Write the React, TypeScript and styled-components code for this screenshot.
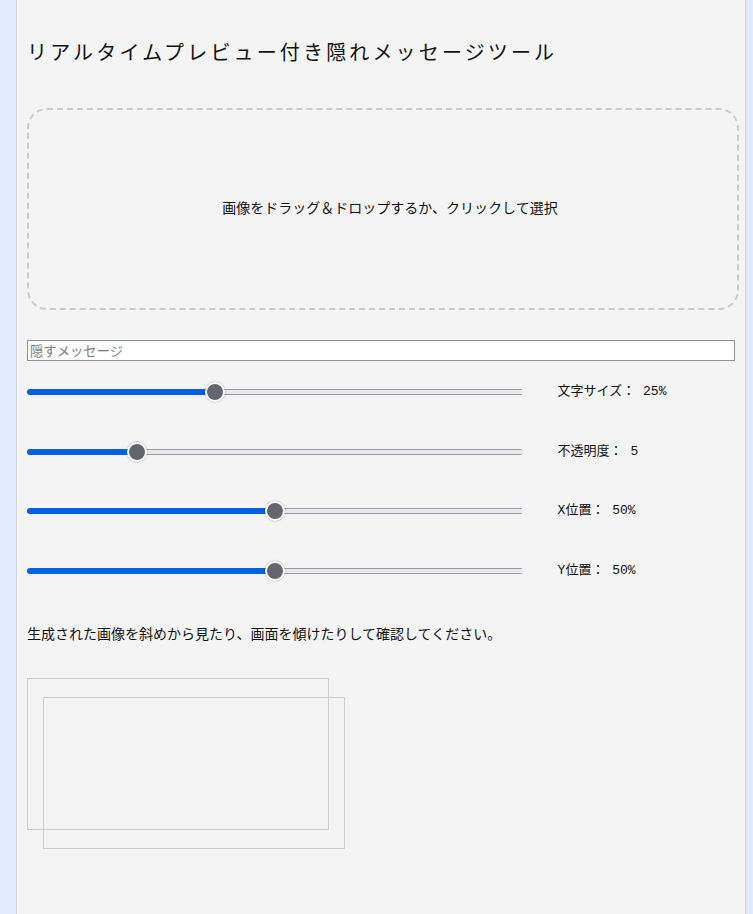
import React, { useState } from "react";
import styled, { createGlobalStyle } from "styled-components";

const GlobalStyle = createGlobalStyle`
  html, body {
    margin: 0;
    padding: 0;
    background: #e1e9fc;
  }
  body {
    font-family: "Noto Sans CJK JP", "Liberation Sans", sans-serif;
    color: #111;
  }
`;

const Panel = styled.div`
  box-sizing: border-box;
  width: 730px;
  margin-left: 16px;
  min-height: 100vh;
  background: #f4f4f4;
  border-left: 1px solid #d3d6dd;
  border-right: 1px solid #d3d6dd;
  padding: 40px 10px 40px;
`;

const Title = styled.h1`
  margin: 0;
  font-size: 20px;
  line-height: 24px;
  font-weight: 400;
  letter-spacing: 3.15px;
  color: #111;
`;

const DropZone = styled.div`
  box-sizing: border-box;
  margin-top: 44px;
  height: 202px;
  width: calc(100% + 4px);
  padding: 0 0 4px 14px;
  border: 2px dashed #cccccc;
  border-radius: 20px;
  display: flex;
  align-items: center;
  justify-content: center;
  font-size: 14px;
  line-height: 20px;
  color: #111;
  cursor: pointer;
`;

const MessageInput = styled.input`
  display: block;
  box-sizing: border-box;
  margin: 30px 0 0;
  width: 100%;
  height: 21px;
  padding: 0 2px;
  border: 1px solid #8f8f9d;
  background: #ffffff;
  font-family: "Noto Sans CJK JP", sans-serif;
  font-size: 13.33px;
  color: #111;
  outline: none;
  &::placeholder {
    color: #7a7a7a;
  }
`;

const Controls = styled.div`
  margin-top: 21px;
  display: flex;
  flex-direction: column;
  gap: 39.5px;
`;

const Row = styled.div`
  display: flex;
  align-items: center;
  height: 20px;
`;

const Range = styled.input`
  -webkit-appearance: none;
  appearance: none;
  width: 70%;
  height: 20px;
  margin: 0;
  padding: 0;
  background: transparent;
  --pct: 50%;
  &::-webkit-slider-runnable-track {
    height: 6px;
    border-radius: 3px;
    background:
      linear-gradient(to right, #0060df 0 var(--pct), transparent var(--pct)),
      linear-gradient(to bottom, #9a9aa6 0 1px, #e9e9ed 1px 5px, #9a9aa6 5px);
  }
  &::-webkit-slider-thumb {
    -webkit-appearance: none;
    appearance: none;
    width: 20px;
    height: 20px;
    margin-top: -7px;
    box-sizing: border-box;
    border-radius: 50%;
    border: 2px solid #ffffff;
    background: #65656f;
    box-shadow: 0 0 2px rgba(0, 0, 0, 0.35);
  }
`;

const Label = styled.span`
  margin-left: 35px;
  font-family: "Liberation Mono", "Noto Sans CJK JP", monospace;
  font-size: 13px;
  line-height: 20px;
  color: #111;
  white-space: pre;
`;

const Note = styled.p`
  margin: 42.5px 0 0;
  font-size: 14px;
  line-height: 20px;
  color: #111;
`;

const Preview = styled.div`
  position: relative;
  margin-top: 35px;
  width: 346px;
  height: 172px;
`;

const Canvas = styled.canvas`
  display: block;
  width: 300px;
  height: 150px;
  border: 1px solid #cccccc;
`;

const OverlayCanvas = styled(Canvas)`
  position: absolute;
  left: 16px;
  top: 19px;
`;

type SliderDef = {
  key: string;
  label: string;
  min: number;
  max: number;
  suffix: string;
};

const sliders: SliderDef[] = [
  { key: "size", label: "文字サイズ：", min: 10, max: 50, suffix: "%" },
  { key: "opacity", label: "不透明度：", min: 1, max: 20, suffix: "" },
  { key: "x", label: "X位置：", min: 0, max: 100, suffix: "%" },
  { key: "y", label: "Y位置：", min: 0, max: 100, suffix: "%" },
];

export default function App() {
  const [values, setValues] = useState<Record<string, number>>({
    size: 25,
    opacity: 5,
    x: 50,
    y: 50,
  });
  const [message, setMessage] = useState("");

  return (
    <>
      <GlobalStyle />
      <Panel>
        <Title>リアルタイムプレビュー付き隠れメッセージツール</Title>
        <DropZone>画像をドラッグ＆ドロップするか、クリックして選択</DropZone>
        <MessageInput
          type="text"
          placeholder="隠すメッセージ"
          value={message}
          onChange={(e) => setMessage(e.target.value)}
        />
        <Controls>
          {sliders.map((s) => {
            const v = values[s.key];
            const pct = ((v - s.min) / (s.max - s.min)) * 100;
            return (
              <Row key={s.key}>
                <Range
                  type="range"
                  min={s.min}
                  max={s.max}
                  value={v}
                  style={{ ["--pct" as any]: `calc(10px + ${pct / 100} * (100% - 20px))` }}
                  onChange={(e) =>
                    setValues({ ...values, [s.key]: Number(e.target.value) })
                  }
                />
                <Label>
                  {s.label} {v}
                  {s.suffix}
                </Label>
              </Row>
            );
          })}
        </Controls>
        <Note>生成された画像を斜めから見たり、画面を傾けたりして確認してください。</Note>
        <Preview>
          <Canvas width={300} height={150} />
          <OverlayCanvas width={300} height={150} />
        </Preview>
      </Panel>
    </>
  );
}
